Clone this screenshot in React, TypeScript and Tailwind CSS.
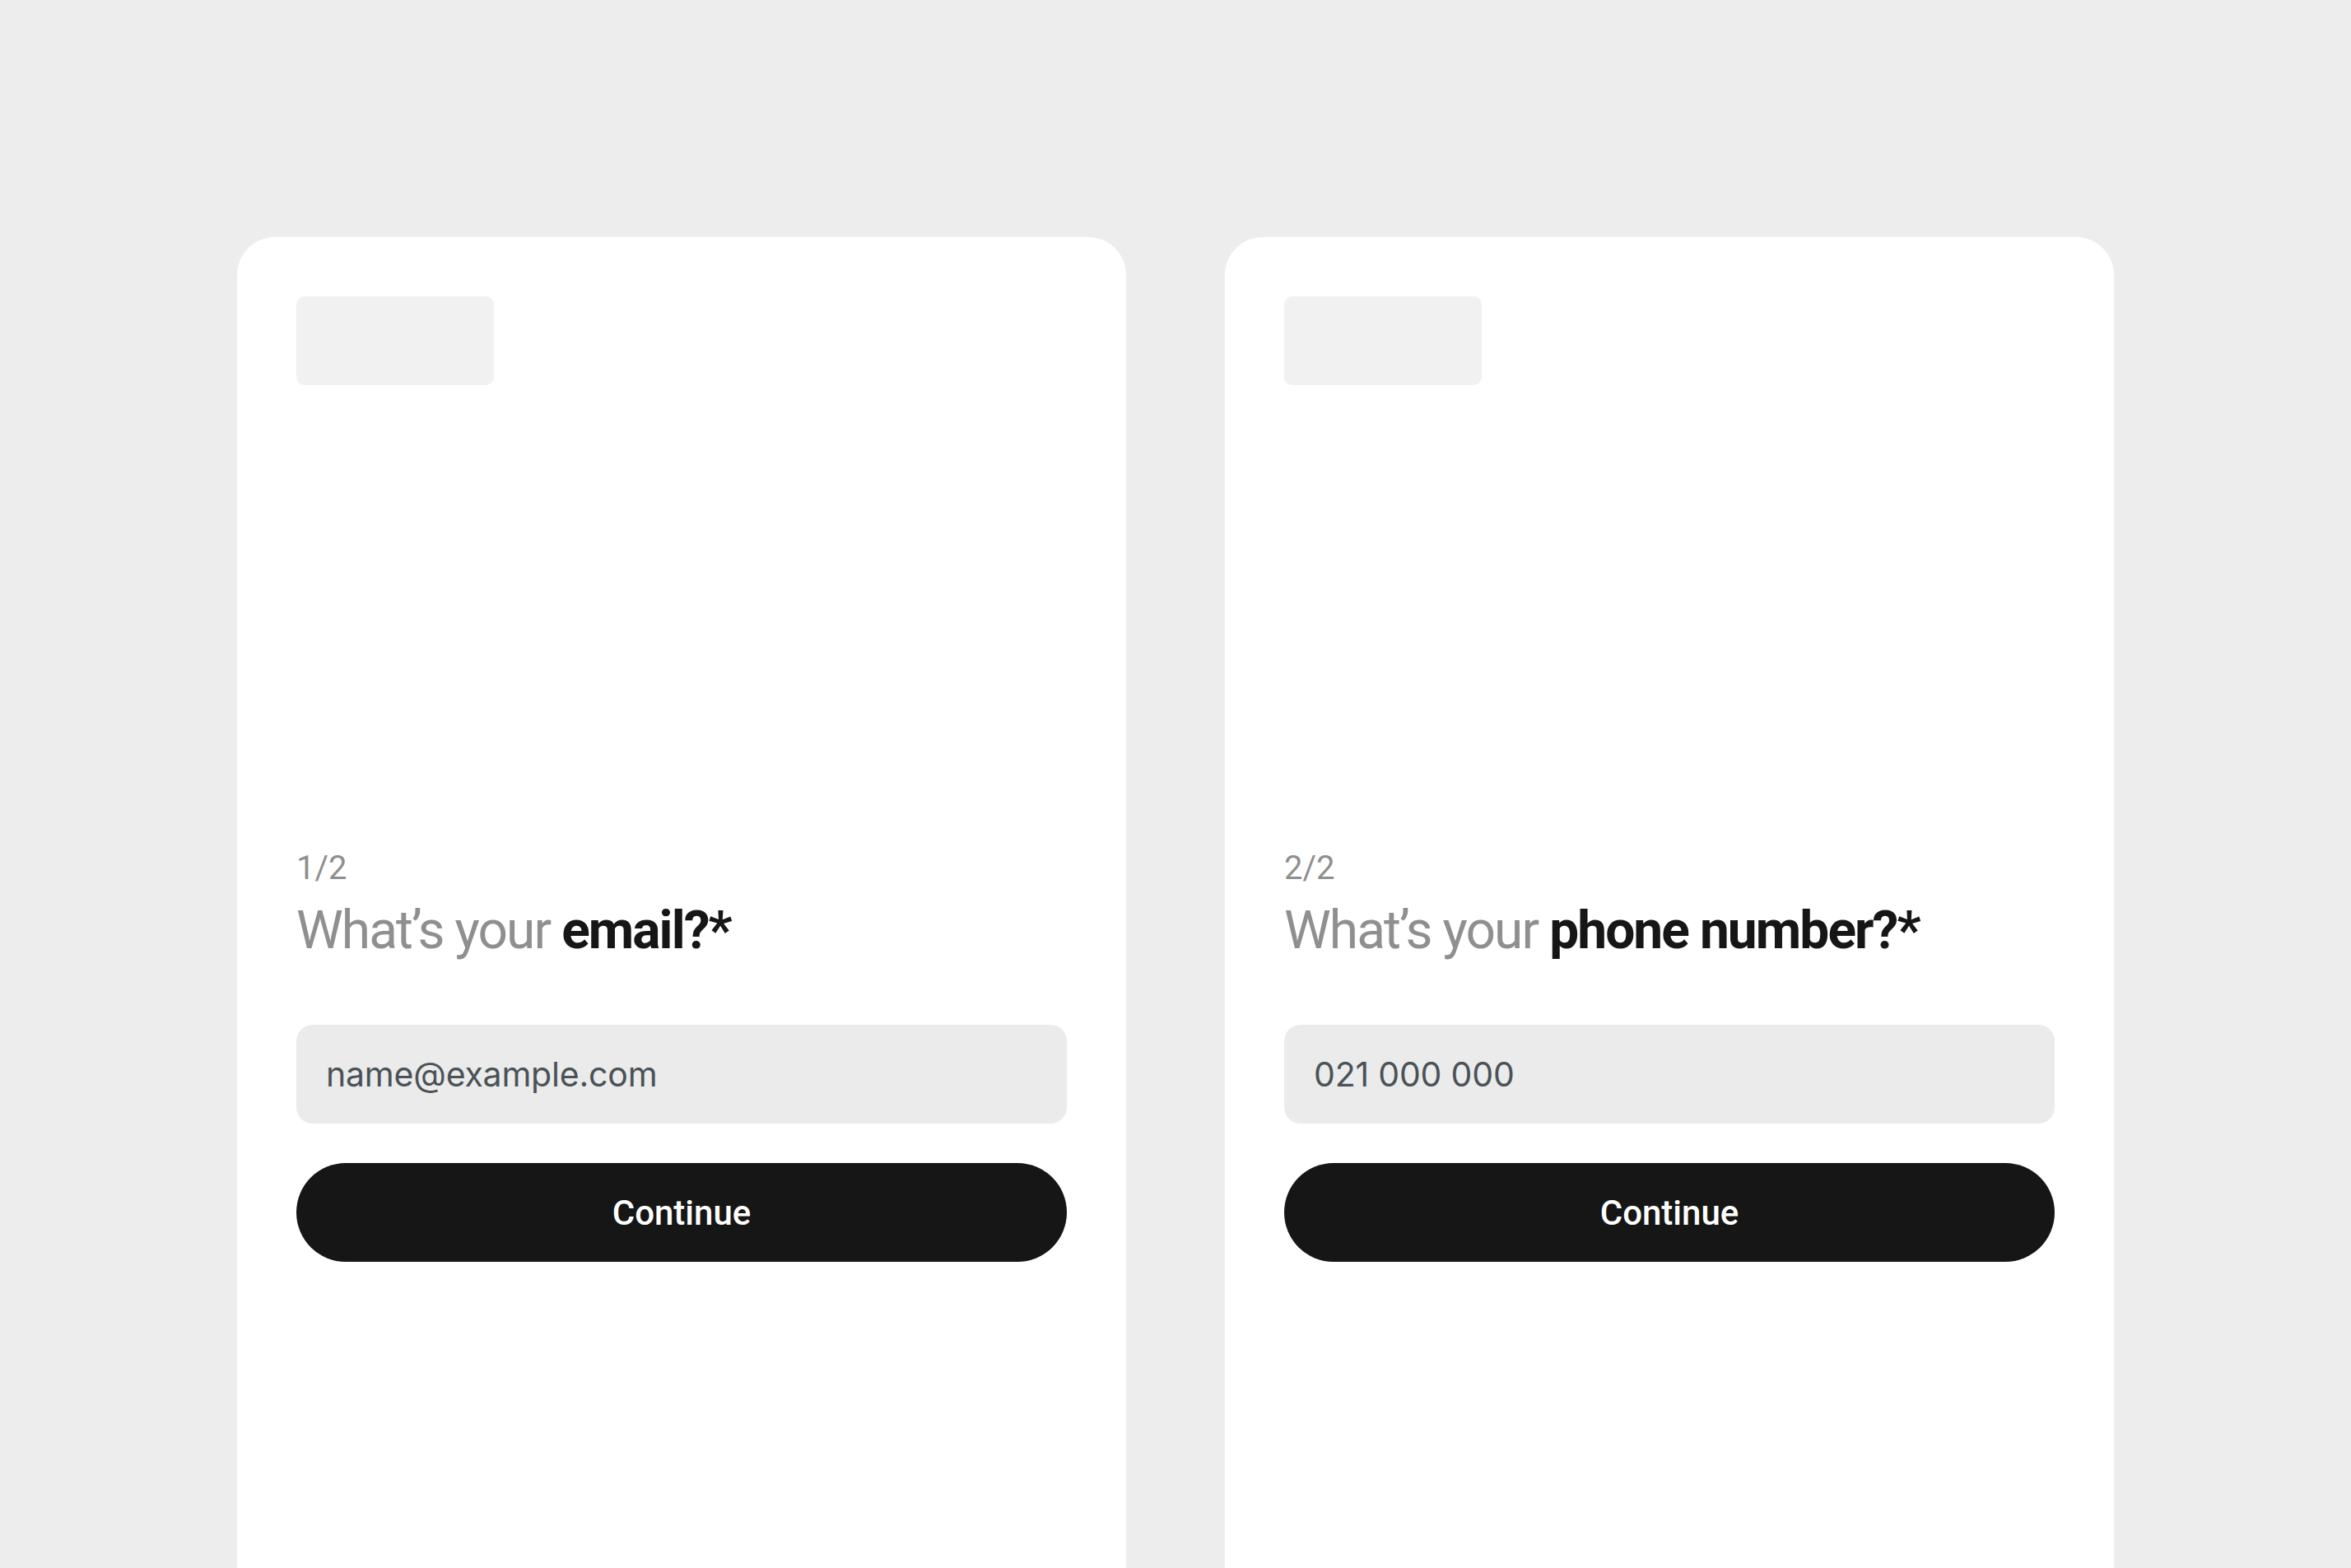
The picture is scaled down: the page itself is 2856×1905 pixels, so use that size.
import { useState } from 'react';

type StepCardProps = {
    step: string;
    question: string;
    placeholder: string;
    inputType: string;
};

function StepCard({ step, question, placeholder, inputType }: StepCardProps) {
    const [value, setValue] = useState('');

    return (
        <div className="w-[1080px] h-[1720px] shrink-0 bg-white rounded-t-[46px] px-[72px] pt-[72px] flex flex-col">
            {/* logo slot */}
            <div className="w-[240px] h-[108px] rounded-[10px] bg-[#f1f1f1]" />

            <div className="mt-[563px] text-[40px] leading-[48px] text-[#8f8f8f]">{step}</div>
            <h2 className="mt-[13px] text-[64px] leading-[77px] tracking-[-0.03em] text-[#8f8f8f] font-normal">
                What’s your <span className="font-bold text-[#161616]">{question}</span>
            </h2>

            <input
                type={inputType}
                value={value}
                onChange={e => setValue(e.target.value)}
                placeholder={placeholder}
                className="mt-[76px] h-[120px] w-full rounded-[20px] bg-[#ebebeb] px-[36px] font-['Inter',sans-serif] text-[41px] tracking-[-0.005em] text-[#161616] placeholder:text-[#4a5257] outline-none"
            />

            <button className="mt-[48px] h-[120px] w-full rounded-full bg-[#161616] text-white text-[42px] font-medium">
                Continue
            </button>
        </div>
    );
}

export default function App() {
    return (
        <div className="h-[1905px] overflow-hidden bg-[#ededed] flex justify-center gap-[120px] pt-[288px] font-['Roboto',sans-serif]">
            <StepCard step="1/2" question="email?*" placeholder="name@example.com" inputType="email" />
            <StepCard step="2/2" question="phone number?*" placeholder="021 000 000" inputType="tel" />
        </div>
    );
}
